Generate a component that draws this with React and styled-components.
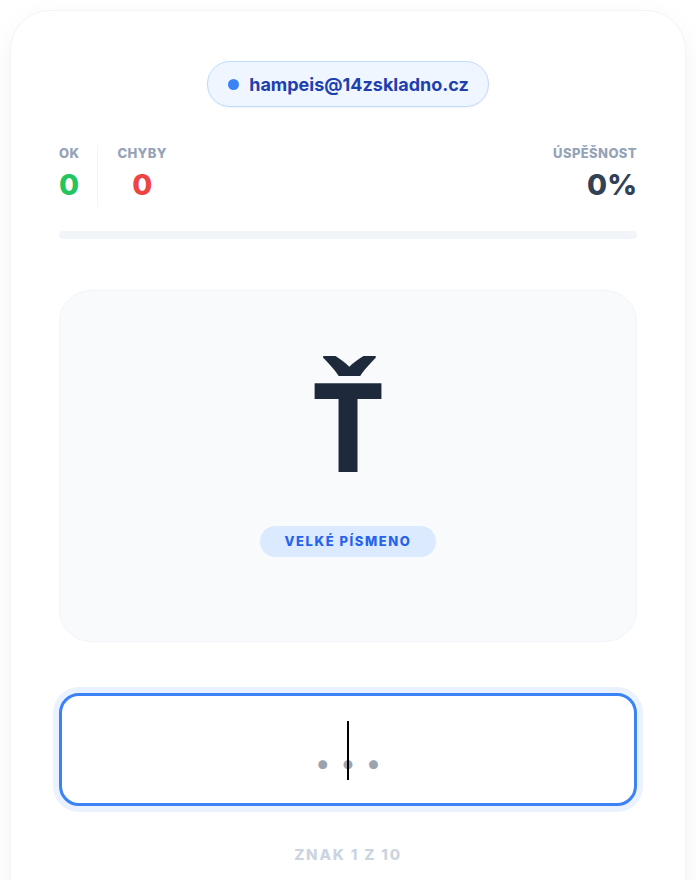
import React from "react";
import styled, { createGlobalStyle } from "styled-components";

const GlobalStyle = createGlobalStyle`
  * { box-sizing: border-box; }
  html, body {
    margin: 0;
    padding: 0;
    background: #ffffff;
    font-family: Inter, "Noto Sans", "Liberation Sans", sans-serif;
    -webkit-font-smoothing: antialiased;
  }
`;

const Page = styled.div`
  padding: 10px 10px 0;
  min-height: 880px;
  overflow: hidden;
`;

const Card = styled.main`
  background: #ffffff;
  border: 1px solid #f1f5f9;
  border-radius: 40px;
  box-shadow: 0 10px 30px rgba(15, 23, 42, 0.05);
  padding: 50px 48px 48px;
  display: flex;
  flex-direction: column;
  min-height: 920px;
`;

const UserPill = styled.div`
  align-self: center;
  display: inline-flex;
  align-items: center;
  gap: 10px;
  height: 46px;
  padding: 0 19px 0 20px;
  border-radius: 999px;
  background: #eff6ff;
  border: 1px solid #bfdbfe;
  box-shadow: 0 1px 2px rgba(15, 23, 42, 0.06);
  color: #1e40af;
  font-size: 18px;
  font-weight: 700;
`;

const Dot = styled.span`
  width: 11px;
  height: 11px;
  border-radius: 50%;
  background: #3b82f6;
`;

const StatsRow = styled.section`
  margin-top: 38px;
  display: flex;
  justify-content: space-between;
  align-items: stretch;
`;

const StatGroup = styled.div`
  display: flex;
`;

const Stat = styled.div`
  display: flex;
  flex-direction: column;
  align-items: ${(p) => p.$align || "center"};
  gap: 6px;
  padding-bottom: 4px;
  padding-right: ${(p) => p.$padRight || 0}px;
  padding-left: ${(p) => (p.$divided ? 19 : 0)}px;
  border-left: ${(p) => (p.$divided ? "1px solid #f1f5f9" : "none")};
`;

const StatLabel = styled.span`
  font-size: 13px;
  line-height: 16px;
  font-weight: 800;
  letter-spacing: 0.03em;
  text-transform: uppercase;
  color: #94a3b8;
`;

const StatValue = styled.span`
  font-size: 29px;
  line-height: 36px;
  font-weight: 800;
  color: ${(p) => p.$color};
`;

const Track = styled.div`
  margin-top: 24px;
  height: 8px;
  border-radius: 999px;
  background: #f1f5f9;
  overflow: hidden;
`;

const Fill = styled.div`
  height: 100%;
  background: #22c55e;
  border-radius: inherit;
`;

const LetterCard = styled.section`
  margin-top: 51px;
  height: 352px;
  border-radius: 32px;
  background: #f8fafc;
  border: 1px solid #f1f5f9;
  display: flex;
  flex-direction: column;
  align-items: center;
  justify-content: center;
  gap: 40px;
  padding-bottom: 14px;
`;

const Letter = styled.div`
  font-family: "Noto Sans", "Open Sans", sans-serif;
  font-size: 124px;
  line-height: 1;
  font-weight: 700;
  color: #1e293b;
`;

const Badge = styled.span`
  display: inline-flex;
  align-items: center;
  height: 31px;
  padding: 0 25px;
  border-radius: 999px;
  background: #dbeafe;
  color: #2563eb;
  font-size: 13px;
  font-weight: 800;
  letter-spacing: 0.12em;
  text-transform: uppercase;
`;

const Field = styled.div`
  position: relative;
  margin-top: 51px;
`;

const AnswerInput = styled.input`
  display: block;
  width: 100%;
  height: 113px;
  border: 3px solid #3b82f6;
  border-radius: 20px;
  box-shadow: 0 0 0 6px #eaf2ff;
  outline: none;
  background: #ffffff;
  text-align: center;
  font-family: inherit;
  font-size: 48px;
  font-weight: 800;
  color: #1e293b;
  caret-color: transparent;
  padding: 3px 0 0;
  &::placeholder {
    color: #9ca3af;
  }
`;

/* custom text caret, centred over the empty field */
const Caret = styled.span`
  position: absolute;
  left: calc(50% - 1px);
  top: 28px;
  width: 2px;
  height: 59px;
  background: #000000;
  pointer-events: none;
`;

const Progress = styled.p`
  margin: 39px 0 0;
  text-align: center;
  font-size: 15px;
  font-weight: 800;
  letter-spacing: 0.12em;
  text-transform: uppercase;
  color: #cbd5e1;
`;

export default function App() {
  const ok = 0;
  const errors = 0;
  const total = ok + errors;
  const rate = total ? Math.round((ok / total) * 100) : 0;

  return (
    <Page>
      <GlobalStyle />
      <Card>
        <UserPill>
          <Dot />
          hampeis@14zskladno.cz
        </UserPill>

        <StatsRow>
          <StatGroup>
            <Stat $align="flex-start" $padRight={18}>
              <StatLabel>OK</StatLabel>
              <StatValue $color="#22c55e">{ok}</StatValue>
            </Stat>
            <Stat $divided>
              <StatLabel>Chyby</StatLabel>
              <StatValue $color="#ef4444">{errors}</StatValue>
            </Stat>
          </StatGroup>
          <Stat $align="flex-end">
            <StatLabel>Úspěšnost</StatLabel>
            <StatValue $color="#334155">{rate}%</StatValue>
          </Stat>
        </StatsRow>

        <Track>
          <Fill style={{ width: `${rate}%` }} />
        </Track>

        <LetterCard>
          <Letter>Ť</Letter>
          <Badge>Velké písmeno</Badge>
        </LetterCard>

        <Field>
          <AnswerInput autoFocus placeholder=". . ." aria-label="Odpověď" />
          <Caret />
        </Field>

        <Progress>Znak 1 z 10</Progress>
      </Card>
    </Page>
  );
}
